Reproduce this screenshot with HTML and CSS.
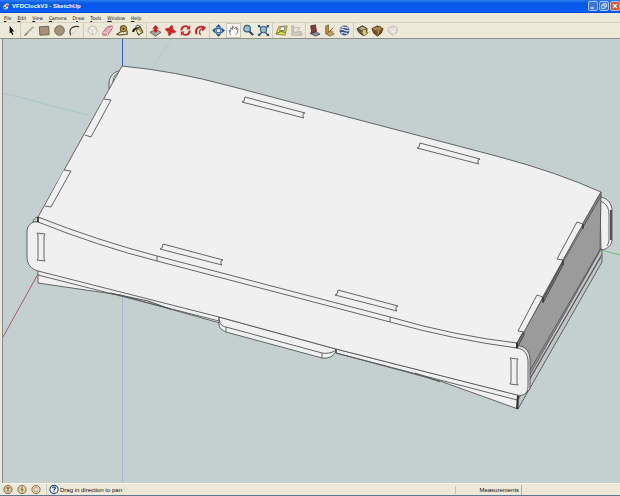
FILE: index.html
```html
<!DOCTYPE html>
<html lang="en">
<head>
<meta charset="utf-8">
<title>VFDClockV3 - SketchUp</title>
<link rel="stylesheet" href="styles.css">
</head>
<body>
<header class="titlebar">
  <svg class="app-icon" viewBox="0 0 10 10" aria-hidden="true"><path d="M2 4 6 1 9 2 7 5 8 7 4 9 1 7Z" fill="#e8edf8"/><path d="m5 3 3-1-1 3-2 1Z" fill="#c44"/><path d="m2 5 3 1-1 2-2-1Z" fill="#345"/></svg>
  <h1 class="title">VFDClockV3 - SketchUp</h1>
  <div class="window-controls">
    <button class="win" aria-label="Minimize"><svg viewBox="0 0 10 10"><path d="M2 7.500h4" stroke="#fff" stroke-width="1.500"/></svg></button>
    <button class="win" aria-label="Restore"><svg viewBox="0 0 10 10"><path d="M4 4V2h4v4H6M2 4h4v4H2z" fill="none" stroke="#fff"/></svg></button>
    <button class="win close" aria-label="Close"><svg viewBox="0 0 10 10"><path d="m2.500 2.500 5 5m0-5-5 5" stroke="#fff" stroke-width="1.500"/></svg></button>
  </div>
</header>
<nav class="menubar">
  <button><u>F</u>ile</button><button><u>E</u>dit</button><button><u>V</u>iew</button><button><u>C</u>amera</button><button>D<u>r</u>aw</button><button><u>T</u>ools</button><button><u>W</u>indow</button><button><u>H</u>elp</button>
</nav>
<div class="toolbar" role="toolbar" aria-label="Tools">
  <div class="group">
    <button aria-label="Select"><svg viewBox="0 0 14 14"><path d="m5 2 5 6-2.500.200 1.500 3-1.300.600L6.300 9 5 10.200Z" fill="#111"/></svg></button>
  </div>
  <div class="group">
    <button aria-label="Line"><svg viewBox="0 0 14 14"><path d="m2 12 9-9" stroke="#aaa69b" stroke-width="2"/><path d="m1.500 12.500 3-2" stroke="#666"/></svg></button>
    <button aria-label="Rectangle"><svg viewBox="0 0 14 14"><path d="m1.500 3 10-.500.500 9-10 .500Z" fill="#a49378" stroke="#6b604e"/></svg></button>
    <button aria-label="Circle"><svg viewBox="0 0 14 14"><circle cx="7" cy="7" r="5.200" fill="#a49378" stroke="#6b604e"/></svg></button>
    <button aria-label="Arc"><svg viewBox="0 0 14 14"><path d="M3 12C0 6 5 1 12 3" fill="none" stroke="#333" stroke-width="1.200"/><path d="m4 11 7-7" stroke="#bbb" stroke-dasharray="1 1"/></svg></button>
  </div>
  <div class="group">
    <button aria-label="Make Component"><svg viewBox="0 0 14 14"><path d="m3 4 4-2 4 2 1 4-4 4-4-2-2-3Z" fill="#f2f1ec" stroke="#bbb8af"/><path d="m3 5 4 2 4-3M7 7v4" fill="none" stroke="#c8c5bb"/></svg></button>
    <button aria-label="Eraser"><svg viewBox="0 0 14 14"><path d="m2 9 5-6 5-1v3l-5 7-5 0Z" fill="#e9a2b0" stroke="#b8647b"/><path d="m2 9 5 0 5-6M7 9v3" fill="none" stroke="#f9d8de"/></svg></button>
    <button aria-label="Tape Measure"><svg viewBox="0 0 14 14"><circle cx="8" cy="5" r="3.500" fill="#c39a36" stroke="#493c1a"/><circle cx="8" cy="5" r="1.200" fill="#433"/><path d="m6 8-5 3 3 1 8-1v-4" fill="none" stroke="#75602a" stroke-width="1.500"/></svg></button>
    <button aria-label="Paint Bucket"><svg viewBox="0 0 14 14"><path d="m5 5 5-2 3 6-5 3Z" fill="#aaa05c" stroke="#4c461f"/><path d="M1 8c1-4 4-5 8-4L5 6 3 9Z" fill="#29261a"/><path d="M5 4c0-4 5-3 5 0" fill="none" stroke="#444"/><path d="m7 7 3 3" stroke="#eee9c0" stroke-width="2"/></svg></button>
  </div>
  <div class="group">
    <button aria-label="Push/Pull"><svg viewBox="0 0 14 14"><path d="m1 9 6-3 6 3-6 4Z" fill="#a8a6a0" stroke="#605e58"/><path d="M5.500 9V5H3.500L7 1l3.500 4h-2v4Z" fill="#d9171c"/></svg></button>
    <button aria-label="Move"><svg viewBox="0 0 14 14"><path d="m7 1 2 3-1 2 2-1 3 2-3 2-2-1 1 2-2 3-2-3 1-2-2 1-3-2 3-2 2 1-1-2Z" fill="#dc1e22" stroke="#a81a1c" stroke-width=".5" transform="rotate(15 7 7)"/></svg></button>
    <button aria-label="Rotate"><svg viewBox="0 0 14 14"><path d="M2.500 7A4.500 4.500 0 0 1 10 3.500M11.500 7A4.500 4.500 0 0 1 4 10.500" fill="none" stroke="#c8262a" stroke-width="2"/><path d="m12 1v5H8ZM2 13V8h4Z" fill="#c8262a"/></svg></button>
    <button aria-label="Offset"><svg viewBox="0 0 14 14"><path d="M3 11C0 5 6 1 12 4" fill="none" stroke="#bd252a" stroke-width="2"/><path d="M7 12C5 8 6 6 9 5" fill="none" stroke="#a53a3a" stroke-width="1.300"/><path d="m8 2 5 2-4 4Z" fill="#c8262a"/></svg></button>
  </div>
  <div class="group">
    <button aria-label="Orbit"><svg viewBox="0 0 14 14"><ellipse cx="7" cy="7" rx="5" ry="2.500" fill="none" stroke="#315e9d" stroke-width="1.500"/><ellipse cx="7" cy="7" rx="2.500" ry="5" fill="none" stroke="#4c7bb8" stroke-width="1.500"/><path d="m7 0 2 3H5Zm0 14 2-3H5ZM0 7l3-2v4Zm14 0-3-2v4Z" fill="#254c86"/></svg></button>
    <button class="pressed" aria-label="Pan" aria-pressed="true"><svg viewBox="0 0 14 14"><path d="m4 12-2-5 2 1 0-5 2 3V2l2 4 1-4 1 4 2-2-1 6-2 3Z" fill="#fff"/><path d="m4 12-2-5 2 1V4l2 2V2l2 3 2-2 0 3 2-1-1 5-2 2" fill="none" stroke="#555" stroke-width=".800"/></svg></button>
    <button aria-label="Zoom"><svg viewBox="0 0 14 14"><path d="m7 7 5 5" stroke="#273746" stroke-width="2"/><circle cx="5.500" cy="5" r="3.500" fill="#94c1d8" stroke="#345d74" stroke-width="1.200"/></svg></button>
    <button aria-label="Zoom Extents"><svg viewBox="0 0 14 14"><path d="m2 2 10 10M12 2 2 12" stroke="#264a72" stroke-width="1.500"/><circle cx="7" cy="6" r="3.500" fill="#91b7ce" stroke="#315673"/><path d="M1 1h3L1 4Zm12 0h-3l3 3ZM1 13h3l-3-3Zm12 0h-3l3-3Z" fill="#31557c"/></svg></button>
  </div>
  <div class="group">
    <button aria-label="Add Location"><svg viewBox="0 0 14 14"><path d="m1 11 3-8 9-1-2 10Z" fill="#e3dc49" stroke="#8b852d"/><path d="m6 3 5 0-1 4H5Z" fill="#f6f5e8" stroke="#777"/><path d="m2 10 4-2 5 1" fill="none" stroke="#3c6d37"/></svg></button>
    <button aria-label="Toggle Terrain"><svg viewBox="0 0 14 14"><path d="m2 2 2 0 0 7 8-1 1 4-11 0Z" fill="#d1cfc6" stroke="#b3b0a6"/><path d="m5 4 6 0-3 3 3 4" fill="none" stroke="#b5b2a9"/></svg></button>
  </div>
  <div class="group">
    <button aria-label="Photo Textures"><svg viewBox="0 0 14 14"><path d="m2 10 6-2 5 3-5 2Z" fill="#8294a0" stroke="#555"/><path d="m3 2 5-1 1 7-5 2Z" fill="#86383a" stroke="#5b292a"/></svg></button>
    <button aria-label="Position Camera"><svg viewBox="0 0 14 14"><path d="m3 2 3-1 0 8-3 2Z" fill="#b4913d" stroke="#886c31"/><path d="m4 11 5-4 3 4-5 2Z" fill="#b8a165" stroke="#8d7744"/><path d="m6 9 5-5" stroke="#c13e27"/></svg></button>
    <button aria-label="Preview in Google Earth"><svg viewBox="0 0 14 14"><circle cx="7" cy="7" r="5.300" fill="#384c9b"/><path d="M2 6c4-2 6 3 10 1M3 10c3-2 4 1 7 0M4 3c2 2 4-1 7 2" fill="none" stroke="#e5e8f3" stroke-width="1.300"/></svg></button>
  </div>
  <div class="group">
    <button aria-label="Get Models"><svg viewBox="0 0 14 14"><path d="m1 5 6-3 5 3-1 6-4 1-4-3Z" fill="#66552f" stroke="#463e2b"/><path d="m3 5 4-2 4 2-4 2Z" fill="#bdb384"/><path d="M7 6h4v3h2l-4 4-3-4h1Z" fill="#dddf38" stroke="#766"/></svg></button>
    <button aria-label="Share Model"><svg viewBox="0 0 14 14"><path d="m1 5 6-3 6 3-2 5-4 3-4-3Z" fill="#7b4c27" stroke="#513823"/><path d="m2 5 5-2 5 2-5 3Z" fill="#c58c4e"/><path d="m7 12 0-5-2 0 5-5 1 5H9v4Z" fill="#aa8f45" stroke="#6a482d" stroke-width=".500"/></svg></button>
    <button aria-label="Share Component"><svg viewBox="0 0 14 14"><path d="m2 5 5-3 5 2 0 5-5 3-4-3Z" fill="#dedcd3" stroke="#bbb8ae"/><path d="m3 5 4 2 4-3M6 8l4 0-2 3" fill="none" stroke="#f7f6f0"/></svg></button>
  </div>
</div>
<main class="viewport">
  <svg class="model" viewBox="3 39 617 444" preserveAspectRatio="xMinYMin slice" role="img" aria-label="Clock case model">
    <g fill="none">
      <path d="M122.500 39v27" stroke="#3a5bb5"/>
      <path d="M122.500 296v187" stroke="#a9b9d2"/>
      <path d="M3 93 88 115" stroke="#aac7c5"/>
      <path d="m152 68 20-29" stroke="#b7bcbc" stroke-dasharray="1 1"/>
      <path d="M38 274 3 337" stroke="#a95c62"/>
      <path d="m601 250 19 5" stroke="#6cc06c"/>
    </g>
    <g fill="#f0f0f0" stroke="#555" stroke-width=".9" stroke-linejoin="round">
      <path d="M120 71c-6 0-11 6-11 12v6l4-6Z" fill="#dfe4e4"/>
      <path d="m118 73c-4 2-5 6-5 10" fill="none"/>
      <path d="M600 197c8 1 12 7 12 14v28c0 6-4 10-11 11Z"/>
      <path d="M600 201c6 2 9 7 9 13v25c0 3-1 5-2 7" fill="none"/>
      <path d="M611 210v30" stroke-width="2"/>
      <path d="M38 270v13l82 12 100 28 0-12Z"/>
      <path d="M38 275 219 321" fill="none"/>
      <path d="m110 293 38 8 22 8" fill="none" stroke-width="1.200"/>
      <path d="m602 249v13l-84 147-2-16 84-143Z" fill="#c2c5c5"/>
      <path d="m601 257-71 121-12 22" fill="none"/>
      <path d="M601 195 600 251 524 385 517 344Z" fill="#9b9b9b"/>
      <path d="m601 248-72 124M602 254 526 386" fill="none"/>
      <path d="m336 349 182 46v14l-78-28-104-28Z"/>
      <path d="m336 353 181 47M440 382l-25-9" fill="none"/>
      <path d="m518 395-1 14" stroke="#333" stroke-width="2"/>
      <path d="M219 317v8c0 3 3 5 7 7l96 26c8 1 14-3 14-9Z"/>
      <path d="M219 317c0 6 2 9 7 10l96 26c7 1 13-1 14-4M226 327v5M322 353v5" fill="none"/>
      <path d="M336 348v5" stroke-width="1.500"/>
      <path d="M33 222c1-4 3-5 6-5v5Z" fill="#c9cdcd"/>
      <path d="M517 346c7-1 13 5 13 13v30l-5 5Z" fill="#ddd"/>
      <path d="M38 222C31 221 27 226 27 232v25c0 7 4 12 11 14l181 46 117 32 181 46c6 2 11-2 11-8v-25c0-8-4-13-11-14Z"/>
      <path d="M38 217v5Q98 246 157 261L390 322Q455 340 517 348v-5Z"/>
      <path d="M122 66Q175 71 230 86L500 157Q556 172 601 192L517 343Q455 336 390 317L157 256Q96 240 38 217Z"/>
      <path d="M157 256v5M390 317v5" fill="none"/>
      <path d="m601 192v4l-18 31v-4Z" fill="#888"/>
      <path d="m563 261v4l-20 38v-4ZM524 331v4l-7 13v-5Z" fill="#777" stroke="#444"/>
      <path d="m517 343v5M38 217v5" stroke="#222" stroke-width="1.500"/>
      <path d="m104 99 7 1-20 37-6-2M64 170l7 1-20 36-6-1"/>
      <path d="m583 224-6-2-20 37 6 1Zm-40 73-6-2-19 36 6 1Z"/>
      <path d="M583 224v5M563 260v5M543 297v5" stroke="#333" stroke-width="1.200"/>
      <g fill="none">
        <path id="slot" d="m245 97 60 16-2 1 0 3 1 1-62-16 2-1Z"/>
        <use href="#slot" x="175" y="46"/>
        <use href="#slot" x="-82" y="147"/>
        <use href="#slot" x="93" y="193"/>
        <path d="m37 233 1 2v23l-1 2 8 1-1-2v-23l1-2ZM510 358l1 2v22l-1 2 8 1-1-2v-22l1-2Z"/>
      </g>
    </g>
  </svg>
</main>
<footer class="statusbar">
  <div class="badges">
    <svg viewBox="0 0 12 12" aria-hidden="true"><circle cx="6" cy="6" r="4.500" fill="#d8c5a0" stroke="#806340"/><path d="M6 8.500V6L4.500 4h3L6 6" fill="none" stroke="#8c663e"/></svg>
    <svg viewBox="0 0 12 12" aria-hidden="true"><circle cx="6" cy="6" r="4.500" fill="#e1d2af" stroke="#806340"/><path d="M6 3v6M4.500 6h3" stroke="#8c663e"/></svg>
    <svg viewBox="0 0 12 12" aria-hidden="true"><circle cx="6" cy="6" r="4.500" fill="#e9dcbc" stroke="#806340"/><path d="M8 4.500a2.500 2.500 0 1 0 0 3" fill="none" stroke="#b49a6f"/></svg>
  </div>
  <button class="help" aria-label="Help"><svg viewBox="0 0 12 12"><circle cx="6" cy="6" r="4.500" fill="#f2f5f8" stroke="#28517d" stroke-width="1.200"/><path d="M4.500 4.500c0-2 3.500-1.500 3 .300C7.300 5.500 6 5.500 6 7M6 8v1" fill="none" stroke="#183f70" stroke-width="1.200"/></svg></button>
  <span class="hint">Drag in direction to pan</span>
  <label class="measure-label" for="measure">Measurements</label>
  <input class="measure" id="measure" type="text">
</footer>
</body>
</html>
```
FILE: styles.css
```css
* {
  box-sizing: border-box;
}

body {
  display: flex;
  flex-direction: column;
  height: 100vh;
  margin: 0;
  background: #ece9d8;
  color: #111;
  font: 6px/8px "Liberation Sans", Arial, sans-serif;
  overflow: hidden;
}

button {
  padding: 0;
  border: 0;
  background: none;
  color: inherit;
  font: inherit;
}

svg {
  display: block;
}

.titlebar {
  display: flex;
  align-items: center;
  gap: 2px;
  height: 13px;
  flex: none;
  padding: 0 0 1px 2px;
  background: linear-gradient(#2b7ff0 0, #0a5be6 3px, #0558ee 8px, #0462fb 11px, #0346c4 13px);
}

.app-icon {
  width: 8px;
  height: 9px;
}

.title {
  flex: 1;
  margin: 0;
  color: #fff;
  font-size: 6px;
}

.window-controls {
  display: flex;
  gap: 1px;
}

.win {
  width: 10px;
  height: 10px;
  border: 1px solid #a9c6f5;
  border-radius: 2px;
  background: #3e74df;
}

.win.close {
  background: #d9512d;
}

.menubar {
  display: flex;
  align-items: center;
  gap: 6px;
  height: 9px;
  flex: none;
  padding-left: 4px;
  font-family: "DejaVu Sans Condensed", "DejaVu Sans", sans-serif;
  font-size: 5px;
}

.menubar u {
  text-underline-offset: 1px;
}

.toolbar {
  display: flex;
  align-items: center;
  height: 17px;
  flex: none;
  padding-left: 4px;
  border-top: 1px solid #d6d2c2;
  border-bottom: 1px solid #908f86;
}

.group {
  display: flex;
}

.group + .group {
  margin-left: 1px;
  padding-left: 1px;
  border-left: 1px solid #d0ccbb;
}

.group button {
  width: 15px;
  height: 15px;
  padding: 1px;
}

.group svg {
  width: 13px;
  height: 13px;
}

.group .pressed {
  border: 1px solid #c9c6b8;
  padding: 0;
  background: #f8f7f2;
}

.viewport {
  flex: 1;
  min-height: 0;
  margin-left: 2px;
  border-left: 1px solid #858b88;
  background: #c4d0d0;
}

.model {
  width: 100%;
  height: 100%;
}

.statusbar {
  display: flex;
  align-items: center;
  height: 13px;
  flex: none;
  padding-left: 2px;
  border-top: 1px solid #f8f5ea;
  border-bottom: 1px solid #5e7692;
}

.badges {
  display: flex;
  gap: 2px;
}

.badges svg,
.help svg {
  width: 12px;
  height: 11px;
}

.help {
  margin: 0 0 0 4px;
  padding-left: 1px;
  border-left: 1px solid #d0ccbb;
}

.hint {
  flex: 1;
}

.measure-label {
  padding: 0 2px 0 23px;
  border-left: 1px solid #c5c1b1;
}

.measure {
  width: 16%;
  height: 10px;
  padding: 0 2px;
  border: 0;
  border-left: 1px solid #b5b1a2;
  background: transparent;
  font: inherit;
}
```
